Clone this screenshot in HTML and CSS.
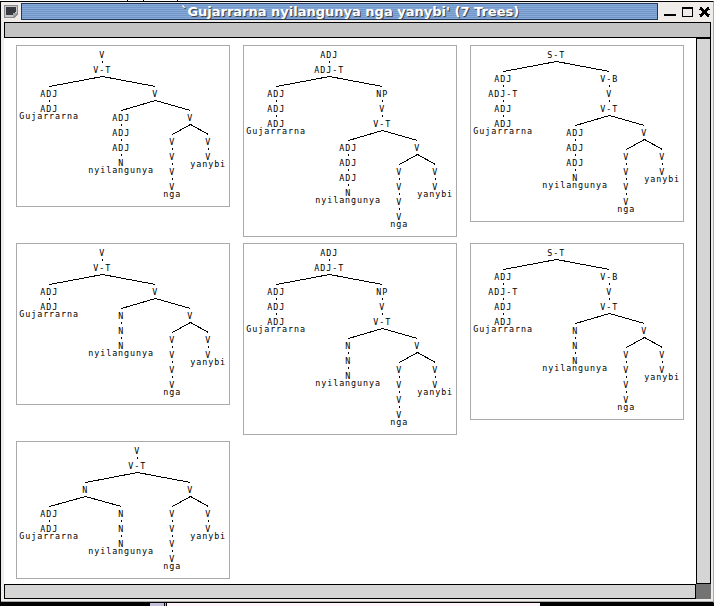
FILE: index.html
```html
<!DOCTYPE html>
<html lang="en">
<head>
<meta charset="utf-8">
<title>Trees</title>
<link rel="stylesheet" href="styles.css">
</head>
<body>
<div class="backdrop-top"><i></i><i></i><i></i></div>
<main class="window">
  <header class="titlebar">
    <svg class="menu-icon" width="14" height="13" viewBox="0 0 14 13" shape-rendering="crispEdges">
      <path d="M0 0H14V9L10 13H0Z" fill="#8b8b8b"/>
      <path d="M1 1H13V8L9 12H1Z" fill="#c8c8c8"/>
      <path d="M2 2H12V7L8 10H2Z" fill="#383c40"/>
      <path d="M9 12V8H13Z" fill="#a5a5a5"/>
    </svg>
    <h1 class="title">`Gujarrarna nyilangunya nga yanybi' (7 Trees)</h1>
    <svg class="controls" width="49" height="16" viewBox="0 0 49 16" shape-rendering="crispEdges">
      <path d="M2 11H14V13H2Z"/>
      <path d="M20 4H31V14H20ZM21 6V13H30V6Z" fill-rule="evenodd"/>
      <path d="M38 5L47 13M47 5L38 13" class="cross"/>
    </svg>
  </header>
  <div class="menubar"></div>
  <section class="viewport">
    <div class="trees" id="trees"></div>
    <div class="scroll-y"></div>
    <div class="scroll-x"></div>
    <div class="corner"></div>
  </section>
</main>
<footer class="backdrop-bottom"><i class="lavender"></i><i class="line"></i><i class="pale"></i></footer>
<script src="trees.js"></script>
</body>
</html>
```
FILE: styles.css
```css
* { box-sizing: border-box; }
body {
  margin: 0;
  width: 714px;
  height: 606px;
  overflow: hidden;
  background: #000;
}
.backdrop-top { display: flex; height: 1px; background: #fff; padding-left: 127px; gap: 15px; }
.backdrop-top i { width: 1px; background: #000; }
.backdrop-top i:last-child { margin-left: 18px; }
.window {
  height: 602px;
  display: grid;
  grid-template-rows: 20px 16px 561px;
  border: 1px solid #000;
  border-right: 1px solid #aaa;
  border-bottom: 1px solid #000;
  background: #f0ecea;
  padding: 0 2px 3px 3px;
  box-shadow: inset 0 -1px #aaa;
}
.titlebar { display: flex; align-items: flex-start; padding-top: 1px; }
.menu-icon { margin: 2px 3px 0 0; }
.title {
  margin: 0;
  width: 637px;
  height: 17px;
  border: 1px solid #20385c;
  background: repeating-linear-gradient(#86a9d8 0 1px, #7297c8 1px 2px);
  color: #fff;
  font: bold 13px/15px "DejaVu Sans", sans-serif;
  text-align: center;
  padding-left: 21px;
  white-space: pre;
  text-shadow: 1px 1px #444;
}
.controls { margin-left: 4px; }
.cross { stroke: #000; stroke-width: 3; fill: none; }
.menubar { border: 1px solid #000; background: #c3c3c3; }
.viewport { display: grid; grid-template-columns: 692px 15px; grid-template-rows: 546px 15px; background: #fff; }
.trees {
  display: grid;
  grid-template-columns: repeat(3, 214px);
  gap: 6px 13px;
  padding: 7px 0 0 12px;
  align-content: start;
  align-items: start;
}
.tree { display: block; border: 1px solid #aaa; }
.tree text {
  font: 8.4px "DejaVu Sans Mono", monospace;
  letter-spacing: .943px;
  white-space: pre;
}
.tree path { fill: none; stroke: #000; stroke-width: 1; shape-rendering: crispEdges; }
.scroll-y { border: 1px solid #000; background: #d5d5d5; }
.scroll-x { border: 1px solid #000; background: #d5d5d5; }
.corner { background: #737373; }
.backdrop-bottom { display: flex; height: 3px; padding-left: 149px; }
.lavender { width: 15px; background: #c4c0dc; border-left: 1px solid #000; }
.line { width: 1px; margin: 0 1px; background: #bbb; }
.pale { width: 373px; background: #fff4fa; }
```
FILE: trees.js
```js
// A node is [label, ...children]; a leaf is a plain word.
const chain = (labels, ...last) =>
  labels.split(" ").reduceRight((kids, label) => [[label, ...kids]], last)[0];

// Horizontal centre of each word in a frame.
const wordX = { Gujarrarna: 33, nyilangunya: 105, nga: 156, yanybi: 192 };

const verb = () => chain("V", chain("V V V V", "nga"), chain("V V", "yanybi"));
const first = (labels) => chain(labels, "Gujarrarna");
const object = (labels) => chain(labels, "nyilangunya");

const withObject = (labels) => [
  chain("V V-T", first("ADJ ADJ"), chain("V", object(labels), verb())),
  chain("ADJ ADJ-T", first("ADJ ADJ ADJ"), chain("NP V V-T", object(labels), verb())),
  chain("S-T", first("ADJ ADJ-T ADJ ADJ"), chain("V-B V V-T", object(labels), verb())),
];

const trees = [
  ...withObject("ADJ ADJ ADJ N"),
  ...withObject("N N N"),
  chain("V V-T", chain("N", first("ADJ ADJ"), object("N N N")), verb()),
];

function centre(node) {
  if (typeof node === "string") return wordX[node];
  const xs = node.slice(1).map(centre);
  return Math.floor((xs[0] + xs[xs.length - 1]) / 2);
}

function draw(root) {
  let texts = "", lines = "", bottom = 0;
  const visit = (node, y) => {
    const x = centre(node);
    const label = typeof node === "string" ? node : node[0];
    texts += `<text x="${x - 3 * label.length + 0.2}" y="${y}">${label}</text>`;
    bottom = Math.max(bottom, y);
    if (typeof node === "string") return;
    const kids = node.slice(1);
    if (kids.length === 1) {
      const word = typeof kids[0] === "string";
      if (!word) lines += `M${x + 0.5} ${y + 3}v2`;
      visit(kids[0], y + (word ? 7 : 15));
    } else {
      for (const kid of kids) {
        lines += `M${x + 0.5} ${y + 3.5}L${centre(kid) + 0.5} ${y + 13.5}`;
        visit(kid, y + 24);
      }
    }
  };
  visit(root, 13);
  const h = bottom + 10;
  return `<svg class="tree" width="214" height="${h}" viewBox="1 1 212 ${h - 2}">${texts}<path d="${lines}"/></svg>`;
}

document.getElementById("trees").innerHTML = trees.map(draw).join("");
```
